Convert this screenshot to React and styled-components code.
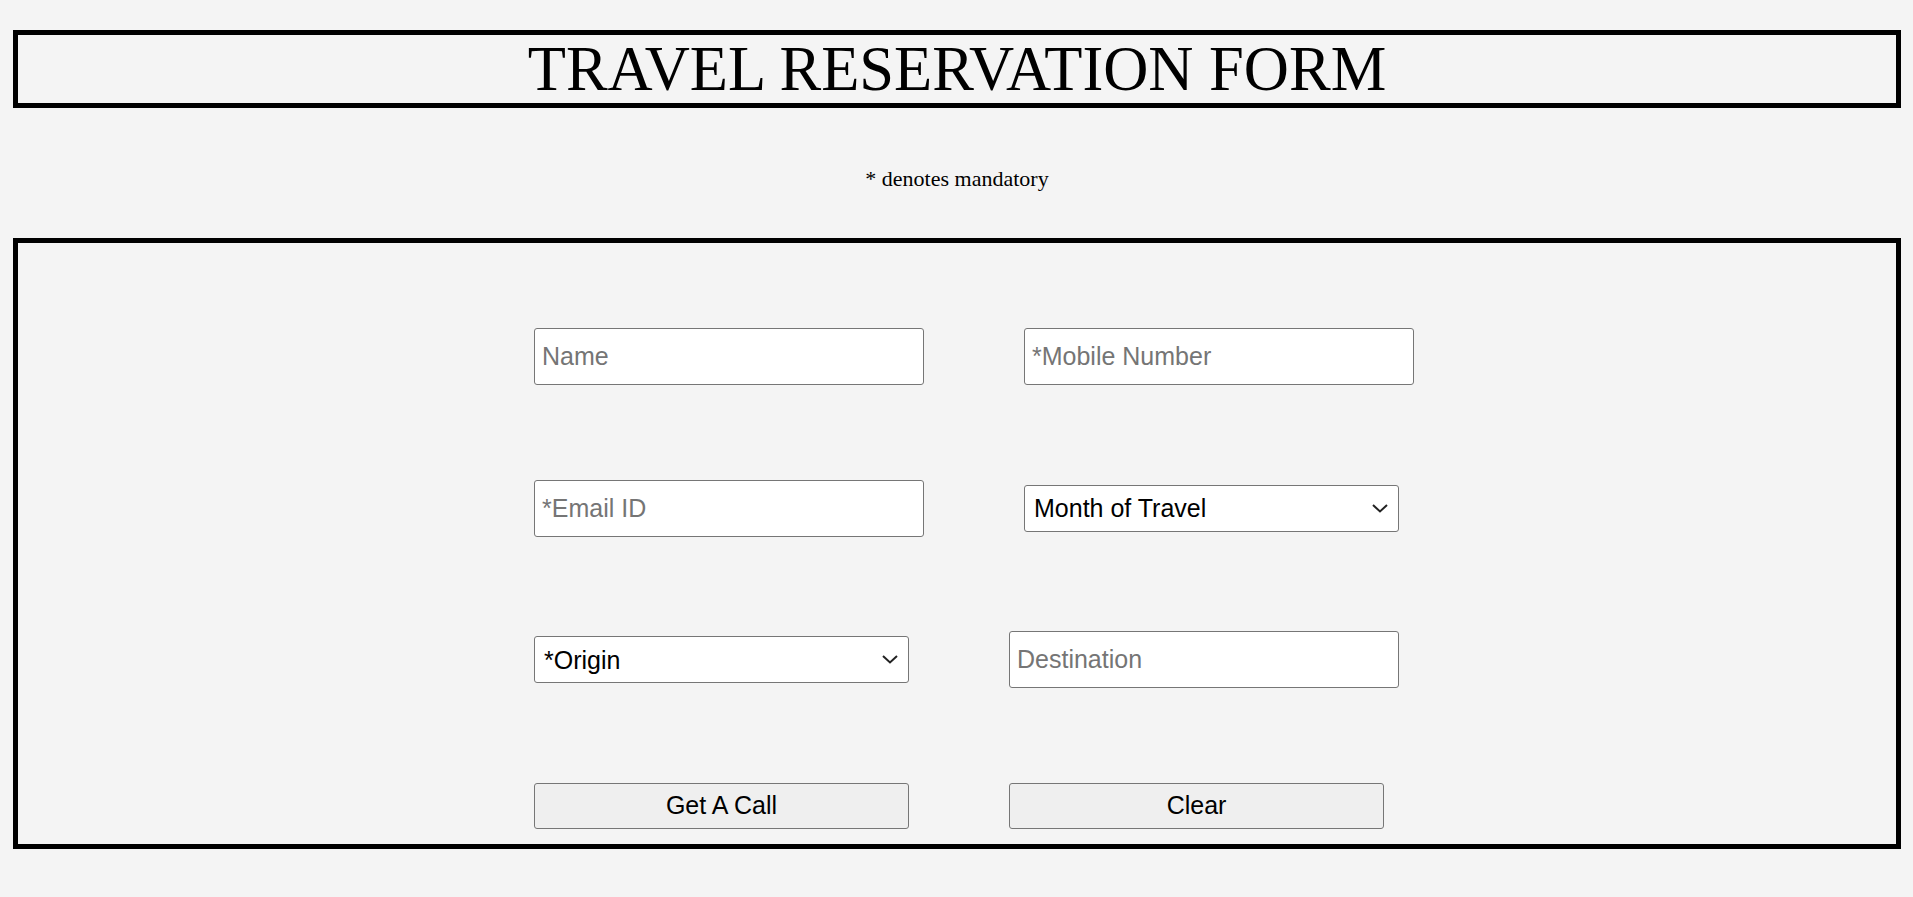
import React from 'react'
import styled, { createGlobalStyle } from 'styled-components'

const GlobalStyle = createGlobalStyle`
    body {
        margin: 0;
        background: #f4f4f4;
        font-family: "Liberation Serif", "Times New Roman", serif;
    }
`;

const Page = styled.div`
    padding: 30px 12px 50px 13px;
`;

const TitleBox = styled.header`
    border: 5px solid #000;
    height: 68px;
    display: flex;
    align-items: center;
    justify-content: center;
`;

const Title = styled.h1`
    margin: 0;
    font-family: "Liberation Serif", "Times New Roman", serif;
    font-weight: 400;
    font-size: 62.5px;
    line-height: 68px;
    color: #000;
`;

const Note = styled.p`
    margin: 58px 0 46px;
    text-align: center;
    font-size: 22px;
    line-height: 26px;
    color: #000;
`;

const FormBox = styled.form`
    border: 5px solid #000;
    padding: 85px 0 15px 516px;
    display: flex;
    flex-direction: column;
    gap: 94.5px;
`;

const Row = styled.div`
    display: flex;
    align-items: ${({ top }) => top ? 'flex-start' : 'center'};
    gap: 100px;
    height: ${({ top }) => top ? '46px' : '57px'};
`;

const TextInput = styled.input`
    box-sizing: border-box;
    width: 390px;
    height: 57px;
    padding: 0 7px;
    border: 1px solid #767676;
    border-radius: 3px;
    background: #fff;
    font-family: "Liberation Sans", Arial, sans-serif;
    font-size: 25px;
    color: #000;
    outline: none;

    &::placeholder {
        color: #757575;
    }
`;

const SelectWrap = styled.div`
    position: relative;
    width: 375px;
    height: 47px;
`;

const Select = styled.select`
    appearance: none;
    box-sizing: border-box;
    width: 100%;
    height: 100%;
    padding: 0 30px 0 9px;
    border: 1px solid #767676;
    border-radius: 3px;
    background: #fff;
    font-family: "Liberation Sans", Arial, sans-serif;
    font-size: 25px;
    color: #000;
    outline: none;
`;

const Chevron = styled.svg`
    position: absolute;
    right: 11px;
    top: 19px;
    pointer-events: none;
`;

const Button = styled.button`
    box-sizing: border-box;
    width: 375px;
    height: 46px;
    border: 1px solid #767676;
    border-radius: 3px;
    background: #efefef;
    font-family: "Liberation Sans", Arial, sans-serif;
    font-size: 25px;
    color: #000;
    padding: 0;
    cursor: pointer;
`;

const Dropdown = ({ label, options }) => (
    <SelectWrap>
        <Select defaultValue="">
            <option value="" disabled>{label}</option>
            {options.map(o => <option key={o}>{o}</option>)}
        </Select>
        <Chevron width="16" height="9" viewBox="0 0 16 9">
            <path d="M1 1 L8 7.5 L15 1" fill="none" stroke="#222" strokeWidth="2" />
        </Chevron>
    </SelectWrap>
);

const months = ['January', 'February', 'March', 'April', 'May', 'June', 'July', 'August', 'September', 'October', 'November', 'December'];
const cities = ['Delhi', 'Mumbai', 'Chennai', 'Kolkata', 'Bengaluru'];

const App = () => {
    return (
        <Page>
            <GlobalStyle />
            <TitleBox>
                <Title>TRAVEL RESERVATION FORM</Title>
            </TitleBox>
            <Note>* denotes mandatory</Note>
            <FormBox onSubmit={e => e.preventDefault()}>
                <Row>
                    <TextInput placeholder="Name" />
                    <TextInput placeholder="*Mobile Number" />
                </Row>
                <Row>
                    <TextInput placeholder="*Email ID" />
                    <Dropdown label="Month of Travel" options={months} />
                </Row>
                <Row>
                    <Dropdown label="*Origin" options={cities} />
                    <TextInput placeholder="Destination" />
                </Row>
                <Row top>
                    <Button type="submit">Get A Call</Button>
                    <Button type="reset">Clear</Button>
                </Row>
            </FormBox>
        </Page>
    )
}

export default App
